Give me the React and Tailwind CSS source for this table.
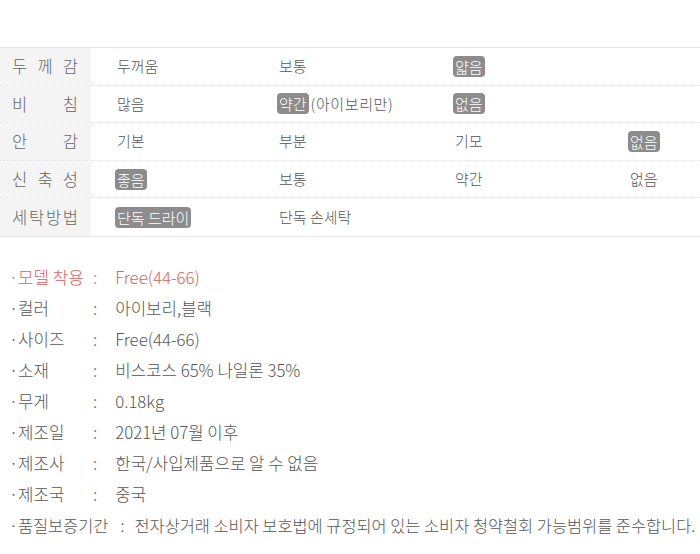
import React from 'react';

const font = { fontFamily: '"Noto Sans CJK KR", "Noto Sans", sans-serif' };

function Label({ chars }) {
  return (
    <div className="flex h-full items-center bg-[#f4f4f4] pl-[12px]">
      <div className="flex w-[66px] justify-between text-[16.5px] font-light text-[#666]">
        {chars.map((c, i) => <span key={i}>{c}</span>)}
      </div>
    </div>
  );
}

function Badge({ children }) {
  return (
    <span className="-ml-[2px] rounded-[4px] bg-[#8c8c8c] px-[2px] leading-[21px] text-white">{children}</span>
  );
}

const rows = [
  { label: ['두', '께', '감'], cells: [['두꺼움'], ['보통'], ['얇음', true], null] },
  { label: ['비', '침'], cells: [['많음'], ['약간', true, '(아이보리만)'], ['없음', true], null] },
  { label: ['안', '감'], cells: [['기본'], ['부분'], ['기모'], ['없음', true]] },
  { label: ['신', '축', '성'], cells: [['좋음', true], ['보통'], ['약간'], ['없음']] },
  { label: ['세', '탁', '방', '법'], cells: [['단독 드라이', true], ['단독 손세탁'], null, null] },
];

const specs = [
  ['모델 착용', 'Free(44-66)'],
  ['컬러', '아이보리,블랙'],
  ['사이즈', 'Free(44-66)'],
  ['소재', '비스코스 65% 나일론 35%'],
  ['무게', '0.18kg'],
  ['제조일', '2021년 07월 이후'],
  ['제조사', '한국/사입제품으로 알 수 없음'],
  ['제조국', '중국'],
];

export default function App() {
  return (
    <div className="h-[554px] w-[700px] overflow-hidden bg-white" style={font}>
      <div className="h-[47px]" />
      {/* 원단 정보 표 */}
      <div className="border-t border-b border-[#e6e6e6]">
        {rows.map((r, i) => (
          <div
            key={i}
            className={
              'grid h-[37.6px] grid-cols-[91px_162px_176px_175px_1fr] ' +
              (i < rows.length - 1 ? 'border-b border-dotted border-[#e2e2e2]' : '')
            }
          >
            <Label chars={r.label} />
            {r.cells.map((c, j) =>
              c ? (
                <div key={j} className="flex h-full items-center pl-[26px] text-[15px] font-light text-[#555]">
                  {c[1] ? <Badge>{c[0]}</Badge> : c[0]}
                  {c[2] && <span className="ml-[2px] tracking-[0.6px]">{c[2]}</span>}
                </div>
              ) : (
                <div key={j} />
              )
            )}
          </div>
        ))}
      </div>

      {/* 상품 정보 */}
      <div className="mt-[25px] flex flex-col text-[16.8px] font-light leading-[31px] text-[#555]">
        {specs.map(([k, v], i) => (
          <div key={i} className={'flex pl-[9px] ' + (i === 0 ? 'text-[#e05c5c]' : '')}>
            <span className="w-[84px] whitespace-nowrap">·{k}</span>
            <span>:</span>
            <span className="ml-[18px]">{v}</span>
          </div>
        ))}
        <div className="flex whitespace-nowrap pl-[9px] text-[16.4px]">
          <span>·품질보증기간</span>
          <span className="ml-[12px]">:</span>
          <span className="ml-[10px]">전자상거래 소비자 보호법에 규정되어 있는 소비자 청약철회 가능범위를 준수합니다.</span>
        </div>
      </div>
    </div>
  );
}
